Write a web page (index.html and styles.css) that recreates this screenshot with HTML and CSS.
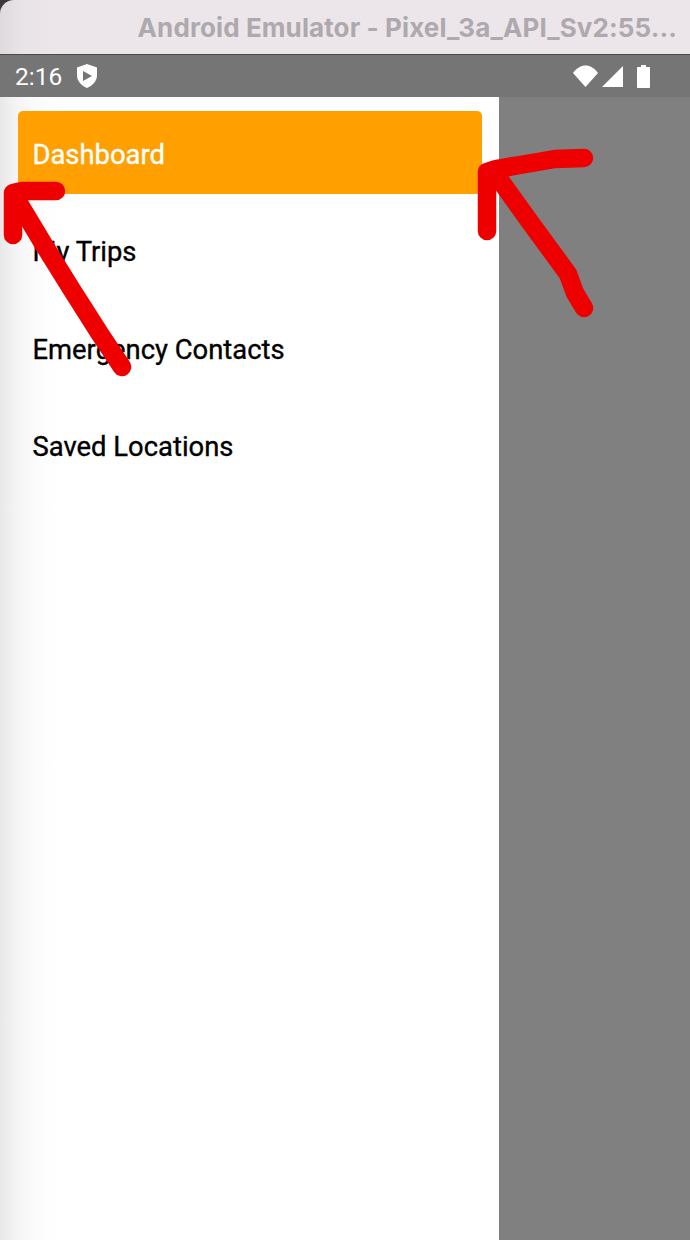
FILE: index.html
```html
<!DOCTYPE html>
<html lang="en">
<head>
<meta charset="utf-8">
<title>Android Emulator</title>
<link rel="stylesheet" href="styles.css">
</head>
<body>
<div class="screen">
  <header class="titlebar">
    <div class="title">Android Emulator - Pixel_3a_API_Sv2:55...</div>
  </header>
  <div class="statusbar">
    <div class="status-left">
      <span class="time">2:16</span>
      <svg class="shield" width="22" height="26" viewBox="0 0 22 26">
        <path fill="#fff" fill-rule="evenodd" d="M11 1 L21 4.500 V12 C21 18 17 22.500 11 25 C5 22.500 1 18 1 12 V4.500 Z M7 8 V18 L16 13 Z"/>
      </svg>
    </div>
    <div class="status-right">
      <svg class="wifi" width="25" height="22" viewBox="0 0 25 22">
        <path fill="#fff" d="M12.500 22 L0 8 C3.500 3 8 0.500 12.500 0.500 C17 0.500 21.500 3 25 8 Z"/>
      </svg>
      <svg class="signal" width="21" height="22" viewBox="0 0 21 22">
        <path fill="#fff" d="M0 22 L21 1 V22 Z"/>
      </svg>
      <svg class="battery" width="13" height="23" viewBox="0 0 13 23">
        <path fill="#fff" d="M4 0 H9 V2 H12 C12.600 2 13 2.400 13 3 V22 C13 22.600 12.600 23 12 23 H1 C0.400 23 0 22.600 0 22 V3 C0 2.400 0.400 2 1 2 H4 Z"/>
      </svg>
    </div>
  </div>
  <main class="body">
    <nav class="drawer">
      <a class="item active">Dashboard</a>
      <a class="item">My Trips</a>
      <a class="item">Emergency Contacts</a>
      <a class="item">Saved Locations</a>
    </nav>
    <div class="scrim"></div>
  </main>
  <svg class="arrows" width="690" height="1240" viewBox="0 0 690 1240">
    <g fill="none" stroke="#ee0000" stroke-width="18.500" stroke-linecap="round" stroke-linejoin="round">
      <path d="M122 367 L100 334 L72 290 L44 245 L14 195"/>
      <path d="M13 235 V193 L22 191 H56"/>
      <path d="M584 158 L555 159 L520 165 L496 169 L487 172 V231"/>
      <path d="M497 176 L530 222 L568 274 L575 293 L584 308"/>
    </g>
  </svg>
</div>
</body>
</html>
```
FILE: styles.css
```css
* { box-sizing: border-box; }
html, body { margin: 0; padding: 0; }
body { background: #3a3a3a; font-family: Roboto, sans-serif; }

.screen {
  position: relative;
  width: 690px;
  height: 1240px;
  overflow: hidden;
  display: flex;
  flex-direction: column;
}

.titlebar {
  height: 55px;
  flex: none;
  padding-right: 13px;
  display: flex;
  align-items: center;
  justify-content: flex-end;
  border-top-left-radius: 14px;
  border-bottom: 1px solid #4a4a4a;
  background: linear-gradient(90deg, #dedadd 0, #e8e3e7 22px, #ece6ea 55px);
}
.title {
  font-family: Inter, sans-serif;
  font-weight: 700;
  font-size: 26px;
  letter-spacing: 0.100px;
  color: #aea9ae;
  white-space: nowrap;
}

.statusbar {
  height: 42px;
  flex: none;
  background: #757575;
  color: #fff;
  padding: 0 40px 0 15px;
  display: flex;
  align-items: center;
  justify-content: space-between;
}
.status-left { display: flex; align-items: center; gap: 14px; }
.time { font-size: 24.500px; font-weight: 400; }
.status-right { display: flex; align-items: center; gap: 4px; }
.battery { margin-left: 10px; }

.body { flex: 1; display: flex; min-height: 0; }
.drawer {
  width: 499px;
  flex: none;
  padding: 14px 17px 0 18px;
  display: flex;
  flex-direction: column;
  gap: 14.500px;
  background: linear-gradient(90deg, #e8e8e8 0, #f3f3f3 14px, #f9f9f9 28px, #fdfdfd 44px, #fff 64px);
}
.item {
  height: 83px;
  flex: none;
  display: flex;
  align-items: center;
  padding: 4px 0 0 14.500px;
  border-radius: 5px;
  font-size: 27.400px;
  font-weight: 400;
  -webkit-text-stroke: 0.350px currentColor;
  color: #000;
}
.item.active { background: #ffa000; color: #fff; }
.scrim { flex: 1; background: #808080; }

.arrows { position: absolute; left: 0; top: 0; pointer-events: none; }
```
